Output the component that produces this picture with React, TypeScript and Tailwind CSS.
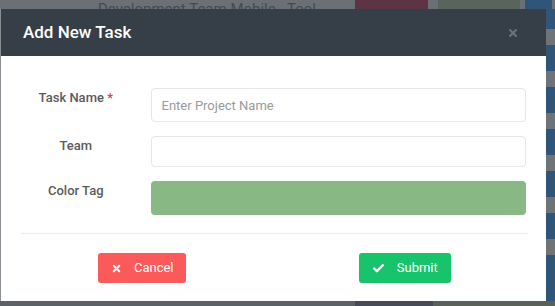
import { X, Check } from 'lucide-react';

export default function App() {
  return (
    <div className="w-[555px] h-[306px] overflow-hidden bg-[#6b7076] font-['Roboto',sans-serif]">
      {/* page behind the overlay */}
      <div className="h-[9px] flex items-end overflow-hidden">
        <div className="w-[98px]" />
        <div className="w-[257px] leading-[14px] text-[15px] text-[#454a50] -mb-[7px] whitespace-nowrap">Development Team Mobile - Tool</div>
        <div className="w-[73px] h-[9px] bg-[#5c3444]" />
        <div className="w-[10px]" />
        <div className="w-[82px] h-[9px] bg-[#58645c]" />
        <div className="w-[5px]" />
        <div className="w-[27px] h-[9px] bg-[#2f5678]" />
      </div>

      <div className="flex h-[292px]">
        <div className="w-px bg-[#8a8f94]" />
        <div className="w-[545px] h-[292px] flex flex-col bg-white">
          <div className="h-[47px] bg-[#363e47] flex items-center justify-between pl-[22px] pr-[27px]">
            <h2 className="text-white text-[17px] font-medium">Add New Task</h2>
            <X size={12} strokeWidth={4} className="text-[#6b737c]" />
          </div>

          <form className="flex flex-col px-[20px] pt-[32px]">
            <div className="flex">
              <label className="w-[110px] text-center text-[13px] leading-4 font-medium text-[#5a5a5a] pt-0.5">
                Task Name <span className="text-[#e53935]">*</span>
              </label>
              <input
                placeholder="Enter Project Name"
                className="ml-[20px] w-[377px] h-[34px] border border-[#e6e6e6] rounded px-[10px] text-[13px] placeholder:text-[#9a9a9a] outline-none"
              />
            </div>

            <div className="flex mt-[14px]">
              <label className="w-[110px] text-center text-[13px] leading-4 font-medium text-[#5a5a5a] pt-0.5">Team</label>
              <input className="ml-[20px] w-[377px] h-[31px] border border-[#e6e6e6] rounded px-[10px] text-[13px] outline-none" />
            </div>

            <div className="flex mt-[14px]">
              <label className="w-[110px] text-center text-[13px] leading-4 font-medium text-[#5a5a5a] pt-0.5">Color Tag</label>
              <div className="ml-[20px] w-[377px] h-[34px] rounded bg-[#88b984]" />
            </div>

            <div className="mt-[18px] h-px bg-[#ececec] w-[507px]" />

            <div className="grid grid-cols-2 gap-[20px] mt-[19px] w-[505px]">
              <div className="flex justify-center">
                <button type="button" className="w-[88px] h-[30px] rounded-[3px] bg-[#fa5a5a] text-white text-[13px] flex items-center justify-center gap-[12px]">
                  <X size={11} strokeWidth={4.5} />
                  Cancel
                </button>
              </div>
              <div className="flex justify-center">
                <button type="button" className="w-[92px] h-[30px] rounded-[3px] bg-[#17c36b] text-white text-[13px] flex items-center justify-center gap-[12px]">
                  <Check size={13} strokeWidth={4.5} />
                  Submit
                </button>
              </div>
            </div>
          </form>
        </div>
        <div className="w-[9px] flex flex-col">
          <div className="h-[20px] bg-[#2f5579]" />
          <div className="h-[16px] bg-[#6e7378]" />
          <div className="h-[26px] bg-[#2f5579]" />
          <div className="h-[16px] bg-[#6e7378]" />
          <div className="h-[26px] bg-[#2f5579]" />
          <div className="h-[16px] bg-[#6e7378]" />
          <div className="h-[26px] bg-[#2f5579]" />
          <div className="h-[16px] bg-[#6e7378]" />
          <div className="h-[26px] bg-[#2f5579]" />
          <div className="h-[16px] bg-[#6e7378]" />
          <div className="h-[26px] bg-[#2f5579]" />
          <div className="h-[16px] bg-[#6e7378]" />
          <div className="flex-1 bg-[#2f5579]" />
        </div>
      </div>

      <div className="h-[5px] flex">
        <div className="w-[355px] bg-[#5c6167]" />
        <div className="w-[78px] bg-[#474b57]" />
        <div className="flex-1 bg-[#58625b]" />
      </div>
    </div>
  );
}
